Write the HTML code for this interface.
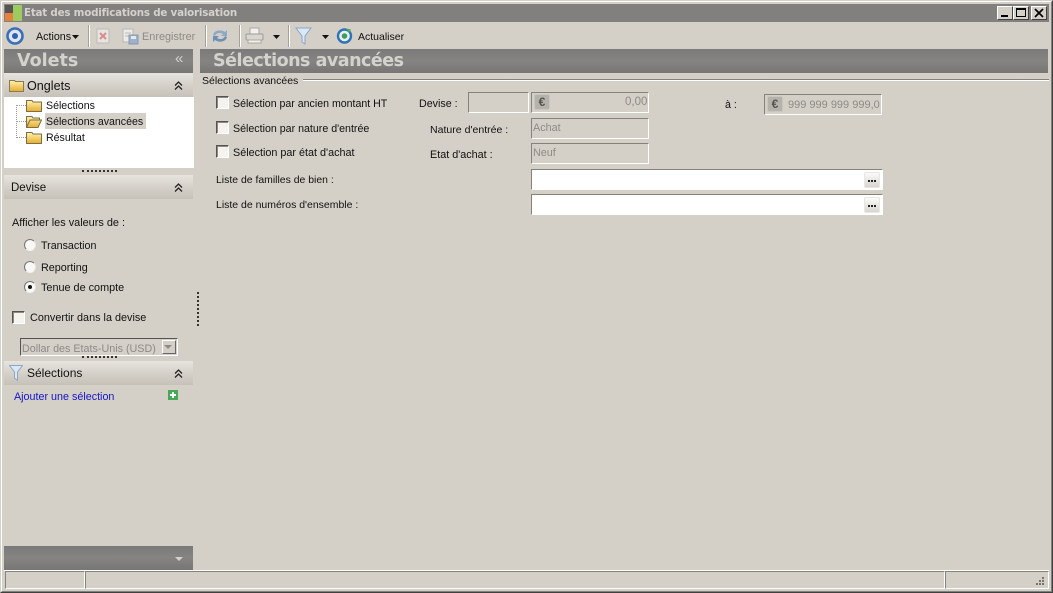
<!DOCTYPE html>
<html lang="fr"><head><meta charset="utf-8"><title>Etat des modifications de valorisation</title>
<style>
html,body{margin:0;padding:0;width:1053px;height:593px;overflow:hidden;background:#d4d0c8}
body{position:relative;font:10.7px "Liberation Sans",sans-serif;color:#111}
div,span,svg{position:absolute;box-sizing:border-box}
.t{white-space:nowrap;line-height:14px}
.g{color:#8d8b87}
.hd{background:linear-gradient(#e7e4de,#d2cec6 60%,#c6c2ba)}
.dk{background:linear-gradient(#7b7a7a,#858483 50%,#777675)}
.sep{width:2px;height:22px;top:25px;border-left:1px solid #a5a29c;border-right:1px solid #fff}
.cb{width:13px;height:13px;background:#f4f3f0;border:1px solid;border-color:#55534f #fff #fff #55534f;box-shadow:inset 1px 1px 0 #8d8a84}
.rd{width:12px;height:12px;border-radius:50%;background:#f8f8f6;border:1px solid #77756f;border-right-color:#e8e6e2;border-bottom-color:#f4f2ee}
.in{background:#d4d0c8;border:1px solid;border-color:#85827c #fff #fff #85827c}
.wh{background:#fff;border:1px solid;border-color:#85827c #fff #fff #85827c}
.eu{width:16px;height:16px;background:#b5b2ac;border:1px solid #c9c6c0;border-radius:2px;color:#55534f;font:bold 12px/14px "Liberation Sans",sans-serif;text-align:center}
.bt{width:16px;height:16px;background:linear-gradient(#fbfbfa,#d8d5cf);border:1px solid #e8e6e2;border-radius:2px}
.bt:after{content:"";position:absolute;left:3px;top:7px;width:2px;height:2px;background:#222;box-shadow:3px 0 0 #222,6px 0 0 #222}
.dots{height:2px;border-top:2px dotted #333}
.wb{top:6px;height:14px;width:16px;background:#d4d0c8;border:1px solid;border-color:#fff #404040 #404040 #fff}
</style></head><body>
<svg width="0" height="0" style="left:0;top:0"><defs><linearGradient id="f" x1="0" y1="0" x2="0" y2="1"><stop offset="0" stop-color="#fff3b0"/><stop offset="1" stop-color="#e6ad2e"/></linearGradient></defs></svg>

<!-- window frame -->
<div style="left:0;top:0;width:1053px;height:593px;border:1px solid #d4d0c8;border-right-color:#404040;border-bottom-color:#404040"></div>
<div style="left:1px;top:1px;width:1051px;height:591px;border:1px solid #fff;border-right-color:#808080;border-bottom-color:#808080"></div>

<!-- title bar -->
<div style="left:4px;top:4px;width:1045px;height:18px;background:#827f7f"></div>
<div style="left:5px;top:5px;width:8px;height:8px;background:#555"></div>
<div style="left:5px;top:13px;width:8px;height:8px;background:#e8803c"></div>
<div style="left:13px;top:5px;width:9px;height:16px;background:#9ccc60"></div>
<div class="t" style="left:24px;top:6px;font:bold 10.3px/14px 'DejaVu Sans',sans-serif;letter-spacing:-.2px;color:#d4d2cd">Etat des modifications de valorisation</div>
<div class="wb" style="left:997px"><div style="left:3px;top:8px;width:7px;height:2px;background:#000"></div></div>
<div class="wb" style="left:1013px"><div style="left:2px;top:1px;width:10px;height:9px;border:1px solid #000;border-top-width:2px"></div></div>
<div class="wb" style="left:1031px"><svg style="left:2px;top:1px" width="10" height="10"><path d="M1 1L9 9M9 1L1 9" stroke="#000" stroke-width="1.7"/></svg></div>

<!-- toolbar -->
<svg style="left:6px;top:27px" width="18" height="18" viewBox="0 0 18 18"><circle cx="9" cy="9" r="7.500" fill="#dfe6f2" stroke="#3b6fb5" stroke-width="2.600"/><circle cx="9" cy="9" r="3" fill="#2f62ad"/></svg>
<div class="t" style="left:36px;top:30px">Actions</div>
<svg style="left:72px;top:35px" width="8" height="5"><path d="M0 0H7L3.5 4Z" fill="#111"/></svg>
<div class="sep" style="left:88px"></div>
<svg style="left:96px;top:28px" width="15" height="16" viewBox="0 0 15 16"><rect x="1" y="1" width="12" height="14" fill="#e8e4e0" stroke="#bdb9b3"/><path d="M4 5L10 11M10 5L4 11" stroke="#d98c8c" stroke-width="2"/></svg>
<svg style="left:122px;top:28px" width="17" height="17" viewBox="0 0 17 17"><rect x="1" y="1" width="10" height="13" fill="#ecebe8" stroke="#b9b7b2"/><path d="M3 5h6M3 8h6" stroke="#b9b7b2"/><rect x="7" y="7" width="9" height="9" fill="#9fb0c8" stroke="#8798b2"/><rect x="9" y="8" width="5" height="3" fill="#e8e8e8"/></svg>
<div class="t g" style="left:142px;top:30px;font-size:10.9px">Enregistrer</div>
<div class="sep" style="left:205px"></div>
<svg style="left:211px;top:27px" width="18" height="18" viewBox="0 0 18 18"><path d="M2 8C3 3 10 2 14 5L16 3V9H10L12 7C9 5 5 6 4 9Z" fill="#8fa8c4"/><path d="M16 10C15 15 8 16 4 13L2 15V9H8L6 11C9 13 13 12 14 9Z" fill="#6f8fb4"/></svg>
<div class="sep" style="left:239px"></div>
<svg style="left:245px;top:27px" width="19" height="18" viewBox="0 0 19 18"><rect x="5" y="1" width="9" height="6" fill="#f2f1ee" stroke="#aaa7a1"/><rect x="1" y="7" width="17" height="6" rx="1" fill="#d8d6d1" stroke="#9e9b95"/><rect x="3" y="13" width="13" height="3" fill="#f2f1ee" stroke="#aaa7a1"/></svg>
<svg style="left:273px;top:35px" width="8" height="5"><path d="M0 0H7L3.5 4Z" fill="#111"/></svg>
<div class="sep" style="left:288px"></div>
<svg style="left:295px;top:27px" width="17" height="18" viewBox="0 0 17 18"><path d="M1 1H16L10 9V17L7 15V9Z" fill="#dbe8f4" stroke="#8aa6c8"/></svg>
<svg style="left:322px;top:35px" width="8" height="5"><path d="M0 0H7L3.5 4Z" fill="#111"/></svg>
<svg style="left:336px;top:27px" width="17" height="18" viewBox="0 0 17 18"><circle cx="8.500" cy="9" r="6.500" fill="#e8f0f6" stroke="#2f72b8" stroke-width="2.400"/><circle cx="8.500" cy="9" r="2.800" fill="#3f9e52"/><path d="M10 1.500L15 2.500L13 6Z" fill="#4aa85c"/></svg>
<div class="t" style="left:358px;top:30px;font-size:10.5px">Actualiser</div>

<!-- left pane -->
<div class="dk" style="left:4px;top:49px;width:189px;height:24px"></div>
<div class="t" style="left:17px;top:50px;font:bold 17.500px/22px 'DejaVu Sans',sans-serif;color:#d4d2cd">Volets</div>
<div class="t" style="left:175px;top:52px;font-size:15px;color:#d4d2cd">«</div>

<div class="hd" style="left:4px;top:73px;width:189px;height:24px"></div>
<svg style="left:9px;top:79px" width="15" height="13" viewBox="0 0 15 13"><path d="M0.500 12.500V1.500H5.500L6.500 2.500H14.500V12.500Z" fill="url(#f)" stroke="#8a7a52"/></svg>
<div class="t" style="left:27px;top:79px;font-size:12.600px">Onglets</div>
<svg style="left:174px;top:81px" width="10" height="10" viewBox="0 0 10 10"><path d="M1 4.500L4.500 1L8 4.500M1 8.500L4.500 5L8 8.500" fill="none" stroke="#222" stroke-width="1.300"/></svg>

<div style="left:4px;top:97px;width:190px;height:71px;background:#fff"></div>
<div style="left:16px;top:105px;height:33px;width:1px;border-left:1px dotted #999"></div>
<div style="left:16px;top:105px;width:10px;border-top:1px dotted #999"></div>
<div style="left:16px;top:121px;width:10px;border-top:1px dotted #999"></div>
<div style="left:16px;top:137px;width:10px;border-top:1px dotted #999"></div>
<svg style="left:26px;top:99px" width="16" height="13" viewBox="0 0 16 13"><path d="M0.500 12.500V1.500H6L7 3H15.500V12.500Z" fill="url(#f)" stroke="#7d6e48"/></svg>
<svg style="left:26px;top:115px" width="16" height="13" viewBox="0 0 16 13"><path d="M0.500 12.500V1.500H6L7 3H13.500V5H4L0.500 12.500H12L15.500 5H4Z" fill="url(#f)" stroke="#7d6e48"/></svg>
<svg style="left:26px;top:131px" width="16" height="13" viewBox="0 0 16 13"><path d="M0.500 12.500V1.500H6L7 3H15.500V12.500Z" fill="url(#f)" stroke="#7d6e48"/></svg>
<div style="left:45px;top:113px;width:101px;height:16px;background:#d4d0c8"></div>
<div class="t" style="left:46px;top:99px;font-size:10.6px">Sélections</div>
<div class="t" style="left:46px;top:115px;font-size:10.6px">Sélections avancées</div>
<div class="t" style="left:46px;top:131px;font-size:10.6px">Résultat</div>

<div class="dots" style="left:82px;top:170px;width:35px"></div>
<div class="hd" style="left:4px;top:175px;width:189px;height:24px"></div>
<div class="t" style="left:11px;top:181px;font-size:11.500px">Devise</div>
<svg style="left:174px;top:183px" width="10" height="10" viewBox="0 0 10 10"><path d="M1 4.500L4.500 1L8 4.500M1 8.500L4.500 5L8 8.500" fill="none" stroke="#222" stroke-width="1.300"/></svg>

<div class="t" style="left:12px;top:216px;font-size:10.9px">Afficher les valeurs de :</div>
<div class="rd" style="left:24px;top:239px"></div>
<div class="t" style="left:41px;top:239px">Transaction</div>
<div class="rd" style="left:24px;top:261px"></div>
<div class="t" style="left:41px;top:261px;font-size:10.8px">Reporting</div>
<div class="rd" style="left:24px;top:281px"><div style="left:3px;top:3px;width:4px;height:4px;border-radius:50%;background:#111"></div></div>
<div class="t" style="left:41px;top:281px;font-size:10.85px">Tenue de compte</div>
<div style="left:197px;top:292px;height:34px;border-left:2px dotted #333"></div>
<div class="cb" style="left:12px;top:311px"></div>
<div class="t" style="left:30px;top:311px;font-size:10.85px">Convertir dans la devise</div>
<div style="left:20px;top:338px;width:158px;height:18px;background:#d4d0c8;border:1px solid;border-color:#55534f #fff #fff #55534f"></div>
<div class="t g" style="left:22px;top:342px;font-size:10.75px">Dollar des Etats-Unis (USD)</div>
<div style="left:162px;top:340px;width:14px;height:14px;background:#d4d0c8;border:1px solid;border-color:#fff #666 #666 #fff"></div>
<svg style="left:164px;top:345px" width="9" height="5"><path d="M0 0H8L4 4Z" fill="#8d8b87"/></svg>
<div class="dots" style="left:82px;top:356px;width:35px"></div>

<div class="hd" style="left:4px;top:361px;width:189px;height:24px"></div>
<svg style="left:9px;top:365px" width="14" height="16" viewBox="0 0 14 16"><path d="M0.500 0.500H13.500L8.500 7V15.500L5.500 13V7Z" fill="#dbe8f4" stroke="#8aa6c8"/></svg>
<div class="t" style="left:27px;top:366px;font-size:12px">Sélections</div>
<svg style="left:174px;top:369px" width="10" height="10" viewBox="0 0 10 10"><path d="M1 4.500L4.500 1L8 4.500M1 8.500L4.500 5L8 8.500" fill="none" stroke="#222" stroke-width="1.300"/></svg>
<div class="t" style="left:14px;top:390px;color:#1414c8;font-size:10.75px">Ajouter une sélection</div>
<svg style="left:168px;top:390px" width="10" height="10" viewBox="0 0 10 10"><rect width="10" height="10" fill="#47a85a"/><path d="M5 2V8M2 5H8" stroke="#fff" stroke-width="2"/></svg>

<div class="dk" style="left:4px;top:546px;width:189px;height:24px"></div>
<svg style="left:175px;top:557px" width="9" height="5"><path d="M0 0H8L4 4Z" fill="#d4d2cd"/></svg>

<!-- right header -->
<div class="dk" style="left:200px;top:49px;width:848px;height:24px"></div>
<div class="t" style="left:213px;top:50px;font:bold 17.500px/22px 'DejaVu Sans',sans-serif;letter-spacing:-.5px;color:#d4d2cd">Sélections avancées</div>

<!-- group -->
<div class="t" style="left:202px;top:74px;font-size:10.5px">Sélections avancées</div>
<div style="left:303px;top:79px;width:746px;height:2px;border-top:1px solid #85827c;border-bottom:1px solid #fff"></div>

<div class="cb" style="left:216px;top:96px"></div>
<div class="t" style="left:233px;top:97px;font-size:10.6px">Sélection par ancien montant HT</div>
<div class="cb" style="left:216px;top:121px"></div>
<div class="t" style="left:233px;top:122px;font-size:10.65px">Sélection par nature d'entrée</div>
<div class="cb" style="left:216px;top:145px"></div>
<div class="t" style="left:233px;top:146px;font-size:10.8px">Sélection par état d'achat</div>
<div class="t" style="left:216px;top:174px;font-size:10.45px">Liste de familles de bien :</div>
<div class="t" style="left:216px;top:199px;font-size:10.47px">Liste de numéros d'ensemble :</div>

<div class="t" style="left:419px;top:97px">Devise :</div>
<div class="t" style="left:430px;top:123px;font-size:10.56px">Nature d'entrée :</div>
<div class="t" style="left:430px;top:148px;font-size:10.8px">Etat d'achat :</div>
<div class="t" style="left:725px;top:98px">à :</div>

<div class="in" style="left:468px;top:92px;width:61px;height:21px"></div>
<div class="in" style="left:531px;top:92px;width:118px;height:21px"></div>
<div class="eu" style="left:534px;top:94px">€</div>
<div class="t g" style="left:625px;top:95px;font-size:11.500px">0,00</div>
<div class="in" style="left:764px;top:94px;width:118px;height:21px"></div>
<div class="eu" style="left:767px;top:96px">€</div>
<div class="t g" style="left:788px;top:98px;font-size:11px">999 999 999 999,0</div>
<div class="in" style="left:531px;top:118px;width:118px;height:21px"></div>
<div class="t g" style="left:533px;top:121px;font-size:10.8px">Achat</div>
<div class="in" style="left:531px;top:143px;width:118px;height:21px"></div>
<div class="t g" style="left:533px;top:146px;font-size:10.8px">Neuf</div>
<div class="wh" style="left:531px;top:169px;width:352px;height:21px"></div>
<div class="bt" style="left:864px;top:172px"></div>
<div class="wh" style="left:531px;top:194px;width:352px;height:21px"></div>
<div class="bt" style="left:864px;top:197px"></div>

<!-- status bar -->
<div style="left:4px;top:570px;width:1045px;height:1px;background:#fff"></div>
<div style="left:5px;top:571px;width:80px;height:18px;border:1px solid;border-color:#85827c #fff #fff #85827c"></div>
<div style="left:85px;top:571px;width:860px;height:18px;border:1px solid;border-color:#85827c #fff #fff #85827c"></div>
<div style="left:945px;top:571px;width:104px;height:18px;border:1px solid;border-color:#85827c #fff #fff #85827c"></div>
<svg style="left:1034px;top:576px" width="12" height="11"><path d="M8 1h2v2H8zM5 4h2v2H5zM8 4h2v2H8zM2 7h2v2H2zM5 7h2v2H5zM8 7h2v2H8z" fill="#77756f"/></svg>
</body></html>
